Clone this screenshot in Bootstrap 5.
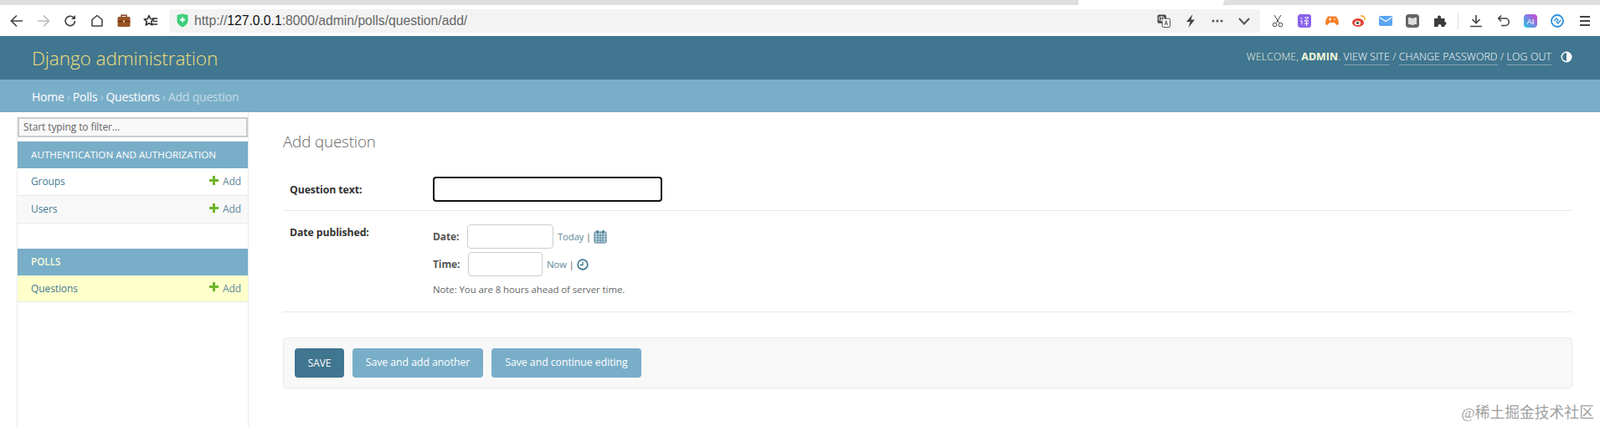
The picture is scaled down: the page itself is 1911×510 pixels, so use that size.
<!doctype html>
<html lang="en"><head><meta charset="utf-8"><title>Add question</title>
<link href="https://cdn.jsdelivr.net/npm/bootstrap@5.3.0/dist/css/bootstrap.min.css" rel="stylesheet">
<style>
html,body{height:510px;overflow:hidden}
body{font-family:"Open Sans","Noto Sans CJK SC",sans-serif;font-size:13px;color:#333;background:#fff;position:relative}
a{text-decoration:none}
.tabstrip{height:6px;background:#fff}
.strip-a{width:1288px;background:#dfdfdf}
.strip-b{width:173px}
.strip-c{background:#dfdfdf;border-top-left-radius:4px}
.toolbar{height:37px;background:#fff;padding-left:0}
.tb-ic{width:20px;height:20px;flex:none}
.urlbar{height:28px;width:1303px;flex:none;margin-left:12px;background:#f3f3f3;border-radius:4px;padding-left:9px;font-family:"Liberation Sans",sans-serif;font-size:15.7px;color:#666;white-space:nowrap}
.urlbar b{font-weight:400;color:#111}
.shield{margin-right:7px;flex:none}
.ubox{width:16px;height:18px;flex:none}
.ext{width:16px;height:16px;border-radius:3px;flex:none}
.sep{width:1px;height:20px;background:#ddd;margin:0 -3px}
.hdr{height:52px;background:#417690;padding:0 33px 0 38px;color:#ffc}
.brand{font-size:22.6px;font-weight:300;color:#f0df7a;letter-spacing:-.1px;padding-top:2px}
.tools{font-size:12.35px;font-weight:300;color:#e8f0e0;letter-spacing:.1px;text-transform:uppercase;padding-bottom:1px}
.tools a{color:#fff;border-bottom:1px solid rgba(255,255,255,.35);padding-bottom:1px}
.tools strong{font-weight:700;color:#f5fbd8}
.tone{margin-left:11px;width:14px;height:14px}
.crumbs{height:39px;background:#79aec8;padding:1px 0 0 38px;color:#c4dce8;font-size:14px;font-weight:400;letter-spacing:-.2px}
.crumbs a{color:#fff}
.crumbs span{margin:0 3px;opacity:.8}
.layout{height:376px}
.side{width:297px;flex:none;padding-left:20px;border-right:1px solid #e8e8e8}
.side-in{border-left:1px solid #eaeaea;height:100%}
.filter{display:block;height:24px;width:100%;margin-top:6px;border:2px solid #ccc;background:#f8f8f8;padding:0 5px;font-size:12px;color:#666;line-height:20px;letter-spacing:-.1px}
.mod-h{height:32px;background:#79aec8;color:#fff;font-size:11.6px;font-weight:400;padding-left:16px;margin-top:5px;letter-spacing:.05px}
.mod-h.second{margin-top:30px;font-weight:600;color:#f4f9dc}
.mod-r{height:33px;border-bottom:1px solid #e8e8e8;padding:0 8px 0 16px;font-size:12px;letter-spacing:-.1px}
.mod-r.alt{background:#f8f8f8}
.mod-r.cur{background:#ffc;height:32px}
.mod-r a{color:#447a92}
.mod-r .addlnk{color:#62899c}
.plus{width:11px;height:11px;margin-right:5px;position:relative;top:-2px}
.main-col{padding:0 33px 0 41px}
.ttl{font-size:18.7px;font-weight:300;color:#666;margin:23px 0 0;height:45px;line-height:24px;letter-spacing:-.1px}
.frow{border-bottom:1px solid #e8e8e8;padding-left:8px}
.r1{height:50px;padding-bottom:2px}
.r1 .flabel{padding-top:3px}
.r2{height:121px;padding-top:14px}
.flabel{width:171px;flex:none;font-weight:700;font-size:12.3px;color:#333;letter-spacing:-.1px}
.r2 .flabel{padding-top:3px}
.bigin{width:274px;height:30px;border:2px solid #111;border-radius:4px;background:#fff}
.dt-row{height:33px;font-size:11.5px;color:#666;letter-spacing:-.1px}
.dt-row strong{font-size:12px;width:41px;color:#555}
.inp{height:29px;border:1px solid #ccc;border-radius:4px;background:#fff;margin-right:5px}
.w1{width:103px}.w2{width:89px;margin-left:1px}
.dt-row a{color:#62899c;font-size:11.5px;letter-spacing:-.3px}
.note{font-size:11.4px;color:#666;margin-top:5px;letter-spacing:-.05px}
.subrow{height:61px;margin-top:30px;background:#f8f8f8;border:1px solid #eaeaea;border-radius:4px;padding-left:13px;gap:10px}
.dj-btn{height:35px;border:0;border-radius:4px;color:#fff;font-size:12.3px;padding:0 15px;background:#79aec8;white-space:nowrap;letter-spacing:-.05px}
.dj-btn.pri{background:#417690;font-size:11.8px;width:59px;padding:0}
.btn2{width:156px;padding:0}.btn3{width:179px;padding:0}
.wm{position:absolute;right:7px;bottom:3px;font-size:17.7px;color:#a0a0a0;letter-spacing:.1px;font-family:"Liberation Serif","Noto Sans CJK SC",sans-serif}
</style></head><body>
<div class="tabstrip d-flex"><div class="strip-a"></div><div class="strip-b"></div><div class="strip-c flex-grow-1"></div></div>
<div class="toolbar d-flex align-items-center">
 <div class="d-flex align-items-center" style="gap:12px;padding-left:10px">
  <svg class="tb-ic" viewBox="0 0 20 20" fill="none" stroke="#444" stroke-width="1.7"><path d="M17 10H4M10 3.5 3.5 10l6.500 6.500"/></svg>
  <svg class="tb-ic" viewBox="0 0 20 20" fill="none" stroke="#bbb" stroke-width="1.7"><path d="M3 10h13M10 3.500 16.500 10 10 16.500"/></svg>
  <svg class="tb-ic" viewBox="0 0 20 20" fill="none" stroke="#444" stroke-width="1.700"><path d="M15.500 10a5.700 5.700 0 1 1-1.700-4.100L15.500 7.500"/><path d="M16 3v5h-5" fill="#444" stroke="none"/></svg>
  <svg class="tb-ic" viewBox="0 0 20 20" fill="none" stroke="#444" stroke-width="1.600"><path d="M4 16V8.500L10 3.500l6 5V16z" stroke-linejoin="round"/></svg>
  <svg class="tb-ic" viewBox="0 0 20 20"><path d="M7 5V3.200h6V5" fill="none" stroke="#7a3f1d" stroke-width="1.500"/><rect x="2.500" y="5" width="15" height="12" rx="1.500" fill="#9a5326"/><rect x="2.500" y="10" width="15" height="1.200" fill="#5e2e12"/><rect x="9" y="9.300" width="2" height="2.600" fill="#e9c27f"/></svg>
  <svg class="tb-ic" viewBox="0 0 20 20"><path d="M8 3.500l1.800 4 4 .4-3 2.700.9 4.300L8 12.700 4.200 15l1-4.300-3-2.700 4-.4z" fill="none" stroke="#333" stroke-width="1.600" stroke-linejoin="round"/><path d="M12 7h6M13 10.500h5M12 14h6" stroke="#333" stroke-width="1.500"/></svg>
 </div>
 <div class="urlbar d-flex align-items-center">
  <svg width="14" height="17" viewBox="0 0 14 17" class="shield"><path d="M7 .5 13.500 2v7c0 3.500-3.500 6-6.500 7.500C4 15 .5 12.500.5 9V2z" fill="#3ecf7b"/><path d="M7 4.500v6M4 7.500h6" stroke="#fff" stroke-width="1.800"/></svg>
  <span>http://<b>127.0.0.1</b>:8000/admin/polls/question/add/</span>
  <div class="ms-auto d-flex align-items-center" style="gap:16px;padding-right:11px">
   <svg class="ubox" viewBox="0 0 17 18"><rect x=".5" y="1" width="11" height="11" rx="2" fill="#444"/><rect x="6.500" y="6" width="10" height="11" rx="1.500" fill="#fff" stroke="#444"/><path d="M9.500 14.500l2-6 2 6M10.300 12.500h2.400" stroke="#444" fill="none" stroke-width=".9"/><path d="M2.500 4h6v4h-6zM5.500 2.500V10" stroke="#fff" fill="none" stroke-width=".9"/></svg>
   <svg class="ubox" viewBox="0 0 16 18"><path d="M10.500 1 3 10h4.500L5.500 17 13 7.500H8.500z" fill="#444"/></svg>
   <svg class="ubox" viewBox="0 0 16 18" fill="#555"><circle cx="3" cy="9" r="1.500"/><circle cx="8" cy="9" r="1.500"/><circle cx="13" cy="9" r="1.500"/></svg>
   <svg class="ubox" viewBox="0 0 16 18" fill="none" stroke="#555" stroke-width="2"><path d="M2 6l6 6.500L14 6"/></svg>
  </div>
 </div>
 <div class="d-flex align-items-center flex-grow-1" style="gap:16.3px;padding-left:13px">
  <svg class="ext" viewBox="0 0 16 16" fill="none" stroke="#444" stroke-width="1"><path d="M4 1l5.500 9M12 1 6.500 10"/><circle cx="4.500" cy="12.500" r="2.300"/><circle cx="11.500" cy="12.500" r="2.300"/></svg>
  <svg class="ext" viewBox="0 0 16 16"><rect width="16" height="16" rx="2" fill="#8a63ea"/><path d="M3.500 4l2 2M3 8h2v4M8 4h5l-5 4h5M10.500 8v6M8 11h5" stroke="#fff" fill="none" stroke-width="1"/></svg>
  <svg class="ext" viewBox="0 0 16 16"><path d="M4 2.500h8c2 0 3.500 4 4 8 .2 2.500-2 3.500-3.500 1.500L11 10H5l-1.500 2c-1.500 2-3.700 1-3.500-1.500.5-4 2-8 4-8z" fill="#f5812c"/><path d="M4 6h3M5.500 4.500v3M10 6h2" stroke="#fff"/></svg>
  <svg class="ext" viewBox="0 0 16 16"><ellipse cx="7" cy="10" rx="7" ry="5" fill="#e4483c"/><ellipse cx="6.500" cy="10.500" rx="3.500" ry="2.600" fill="#fff"/><circle cx="6.500" cy="10.500" r="1.400" fill="#333"/><path d="M10 2c3-.5 5.500 1.500 5 5" stroke="#f4a020" stroke-width="1.500" fill="none"/></svg>
  <svg class="ext" viewBox="0 0 16 16"><rect y="2" width="16" height="12" rx="2" fill="#5ba4f5"/><path d="M1 4l7 4.500L15 4" stroke="#fff" stroke-width="1.300" fill="none"/></svg>
  <svg class="ext" viewBox="0 0 16 16"><rect width="16" height="16" rx="3" fill="#666"/><path d="M3 4c2 0 4 .3 5 1.300C9 4.300 11 4 13 4v8c-2 0-4 .3-5 1.300C7 12.300 5 12 3 12z" fill="#ddd"/></svg>
  <svg class="ext" viewBox="0 0 16 16"><path d="M1 5h4V3.500a2 2 0 0 1 4 0V5h4.500v4a2 2 0 0 1 0 4V15H9.500v-1a2 2 0 0 0-4 0v1H1z" fill="#3c3c3c"/></svg>
  <span class="sep"></span>
  <svg class="ext" viewBox="0 0 16 16" fill="none" stroke="#444" stroke-width="1.600"><path d="M8 1v9M3.500 6 8 10.500 12.500 6M1 14.500h14"/></svg>
  <svg class="ext" viewBox="0 0 16 16" fill="none" stroke="#444" stroke-width="1.600"><path d="M2 5h8a4 4 0 0 1 0 8.500H5M5 1.500 1.700 5 5 8.500"/></svg>
  <svg class="ext" viewBox="0 0 16 16"><defs><linearGradient id="g1" x1="0" y1="1" x2="1" y2="0"><stop offset="0" stop-color="#1fc8e8"/><stop offset="1" stop-color="#d83fd8"/></linearGradient></defs><rect width="16" height="16" rx="4" fill="url(#g1)"/><text x="8" y="11.500" text-anchor="middle" font-size="9.500" fill="#fff" font-family="Liberation Sans">AI</text></svg>
  <svg class="ext" viewBox="0 0 16 16" fill="none"><circle cx="8" cy="8" r="7" stroke="#2a8fe0" stroke-width="1.800"/><path d="M4 8l3-3 2 2-2 2 2 2 3-4" stroke="#2a8fe0" stroke-width="1.300"/></svg>
  <svg class="ext" viewBox="0 0 16 16" stroke="#444" stroke-width="1.800"><path d="M2 3h12M2 8h12M2 13h12"/></svg>
 </div>
</div>
<header class="hdr d-flex align-items-center justify-content-between">
 <div class="brand">Django administration</div>
 <div class="tools d-flex align-items-center">
  <span>Welcome, <strong>admin</strong>.&nbsp;<a href="#">View site</a> / <a href="#">Change password</a> / <a href="#">Log out</a></span>
  <svg class="tone" viewBox="0 0 14 14"><circle cx="7" cy="7" r="5.800" fill="none" stroke="#fff" stroke-width="1.400"/><path d="M7 1.500a5.500 5.500 0 0 1 0 11z" fill="#fff"/></svg>
 </div>
</header>
<nav class="crumbs d-flex align-items-center"><a href="#">Home</a><span>›</span><a href="#">Polls</a><span>›</span><a href="#">Questions</a><span>›</span>Add question</nav>
<div class="layout d-flex">
 <aside class="side"><div class="side-in">
  <div class="filter">Start typing to filter...</div>
  <div class="mod-h d-flex align-items-center">AUTHENTICATION AND AUTHORIZATION</div>
  <div class="mod-r d-flex align-items-center justify-content-between"><a href="#">Groups</a><a href="#" class="addlnk d-flex align-items-center"><svg class="plus" viewBox="0 0 11 11"><path d="M5.500 0v11M0 5.500h11" stroke="#6fb52c" stroke-width="3"/></svg>Add</a></div>
  <div class="mod-r alt d-flex align-items-center justify-content-between"><a href="#">Users</a><a href="#" class="addlnk d-flex align-items-center"><svg class="plus" viewBox="0 0 11 11"><path d="M5.500 0v11M0 5.500h11" stroke="#6fb52c" stroke-width="3"/></svg>Add</a></div>
  <div class="mod-h second d-flex align-items-center">POLLS</div>
  <div class="mod-r cur d-flex align-items-center justify-content-between"><a href="#">Questions</a><a href="#" class="addlnk d-flex align-items-center"><svg class="plus" viewBox="0 0 11 11"><path d="M5.500 0v11M0 5.500h11" stroke="#6fb52c" stroke-width="3"/></svg>Add</a></div>
 </div></aside>
 <main class="main-col flex-grow-1">
  <h1 class="ttl">Add question</h1>
  <div class="frow r1 d-flex align-items-center"><div class="flabel">Question text:</div><div class="bigin"></div></div>
  <div class="frow r2 d-flex">
   <div class="flabel">Date published:</div>
   <div>
    <div class="dt-row d-flex align-items-center"><strong>Date:</strong><div class="inp w1"></div><a href="#">Today</a>&nbsp;|<svg width="16" height="17" viewBox="0 0 16 17" style="margin-left:3px"><rect x="1" y="3" width="14" height="13" rx="1" fill="#cfe2ea" stroke="#417690"/><path d="M1 7h14M1 10h14M1 13h14M5 3v13M8 3v13M11 3v13" stroke="#417690" stroke-width=".8"/><rect x="3.500" y="1" width="2" height="4" fill="#417690"/><rect x="10.500" y="1" width="2" height="4" fill="#417690"/></svg></div>
    <div class="dt-row d-flex align-items-center"><strong>Time:</strong><div class="inp w2"></div><a href="#">Now</a>&nbsp;|&nbsp;<svg width="14" height="14" viewBox="0 0 14 14" fill="none" stroke="#417690"><circle cx="7" cy="7" r="5.800" stroke-width="1.700"/><path d="M7 3.500V7.500H4" stroke-width="1.300"/></svg></div>
    <div class="note">Note: You are 8 hours ahead of server time.</div>
   </div>
  </div>
  <div class="subrow d-flex align-items-center">
   <button class="dj-btn pri" type="button">SAVE</button>
   <button class="dj-btn btn2" type="button">Save and add another</button>
   <button class="dj-btn btn3" type="button">Save and continue editing</button>
  </div>
 </main>
</div>
<div class="wm">@稀土掘金技术社区</div>
<script src="https://cdn.jsdelivr.net/npm/bootstrap@5.3.0/dist/js/bootstrap.bundle.min.js"></script>
</body></html>
